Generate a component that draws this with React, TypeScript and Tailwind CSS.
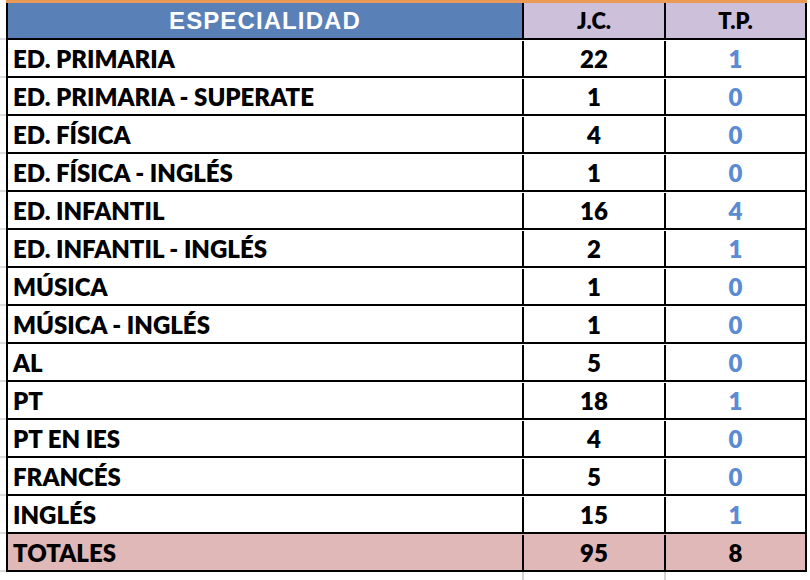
import React from 'react';

type Row = { name: string; jc: number; tp: number };

const rows: Row[] = [
  { name: 'ED. PRIMARIA', jc: 22, tp: 1 },
  { name: 'ED. PRIMARIA - SUPERATE', jc: 1, tp: 0 },
  { name: 'ED. FÍSICA', jc: 4, tp: 0 },
  { name: 'ED. FÍSICA - INGLÉS', jc: 1, tp: 0 },
  { name: 'ED. INFANTIL', jc: 16, tp: 4 },
  { name: 'ED. INFANTIL - INGLÉS', jc: 2, tp: 1 },
  { name: 'MÚSICA', jc: 1, tp: 0 },
  { name: 'MÚSICA - INGLÉS', jc: 1, tp: 0 },
  { name: 'AL', jc: 5, tp: 0 },
  { name: 'PT', jc: 18, tp: 1 },
  { name: 'PT EN IES', jc: 4, tp: 0 },
  { name: 'FRANCÉS', jc: 5, tp: 0 },
  { name: 'INGLÉS', jc: 15, tp: 1 },
];

const body = { fontFamily: 'Lato, "Open Sans", sans-serif' };

// thin grey spreadsheet gridline stub left of the table
const Stub = () => <div className="w-[6px] shrink-0 border-b-2 border-[#dcdcdc]" />;

const App: React.FC = () => {
  const jcTotal = rows.reduce((s, r) => s + r.jc, 0);
  const tpTotal = rows.reduce((s, r) => s + r.tp, 0);

  return (
    <div className="w-[810px] h-[580px] bg-white overflow-hidden" style={body}>
      {/* orange top edge */}
      <div className="flex h-[3px]">
        <div className="w-[6px]" />
        <div className="w-[801px] bg-[#ea9a55]" />
      </div>

      {/* header */}
      <div className="flex h-[37px]">
        <Stub />
        <div className="flex w-[801px] border-x-2 border-b-2 border-black">
          <div
            className="w-[514px] bg-[#5a80b8] text-white flex items-center justify-center text-[24px] font-bold tracking-[1.1px] pt-px"
            style={{ fontFamily: '"Liberation Sans", Arial, sans-serif' }}
          >
            ESPECIALIDAD
          </div>
          <div className="w-[142px] border-l-2 border-black bg-[#ccc0da] flex items-center justify-center text-[22px] font-extrabold text-black">
            J.C.
          </div>
          <div className="flex-1 border-l-2 border-black bg-[#ccc0da] flex items-center justify-center text-[22px] font-extrabold text-black">
            T.P.
          </div>
        </div>
      </div>

      {rows.map((r, i) => (
        <div key={i} className="flex h-[38px]">
          <Stub />
          <div className="flex w-[801px] border-x-2 border-b-2 border-black text-[24px] font-extrabold pt-px">
            <div className="w-[514px] flex items-center pl-[5px] text-black">{r.name}</div>
            <div className="w-[142px] border-l-2 border-black flex items-center justify-center text-black">
              {r.jc}
            </div>
            <div className="flex-1 border-l-2 border-black flex items-center justify-center text-[#5b8bd2]">
              {r.tp}
            </div>
          </div>
        </div>
      ))}

      {/* totals */}
      <div className="flex h-[38px]">
        <Stub />
        <div className="flex w-[801px] border-x-2 border-b-2 border-black bg-[#e0b8b7] text-[24px] font-extrabold text-black pt-px">
          <div className="w-[514px] flex items-center pl-[5px]">TOTALES</div>
          <div className="w-[142px] border-l-2 border-black flex items-center justify-center">{jcTotal}</div>
          <div className="flex-1 border-l-2 border-black flex items-center justify-center">{tpTotal}</div>
        </div>
      </div>

      {/* gridlines below the table */}
      <div className="flex h-[10px]">
        <div className="w-[6px]" />
        <div className="flex w-[801px]">
          <div className="w-[516px]" />
          <div className="w-[142px] border-l-2 border-[#d4d4d4]" />
          <div className="flex-1 border-l-2 border-[#d4d4d4]" />
        </div>
      </div>
    </div>
  );
};

export default App;
